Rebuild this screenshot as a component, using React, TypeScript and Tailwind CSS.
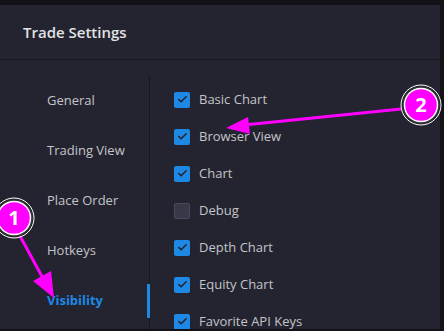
import { Check } from "lucide-react";

const tabs = ["General", "Trading View", "Place Order", "Hotkeys", "Visibility"];

const options = [
  { label: "Basic Chart", checked: true },
  { label: "Browser View", checked: true },
  { label: "Chart", checked: true },
  { label: "Debug", checked: false },
  { label: "Depth Chart", checked: true },
  { label: "Equity Chart", checked: true },
  { label: "Favorite API Keys", checked: true },
];

function Callouts() {
  return (
    <svg
      className="pointer-events-none absolute inset-0"
      width={444}
      height={331}
    >
      {/* 1 */}
      <line x1={20} y1={236} x2={45} y2={282} stroke="#ff00ff" strokeWidth={3} />
      <polygon points="54,298 33,281 51,271" fill="#ff00ff" />
      <circle cx={14} cy={218} r={20} fill="none" stroke="#fff" strokeWidth={1} />
      <circle cx={14} cy={218} r={18} fill="none" stroke="#333" strokeWidth={1.5} />
      <circle cx={14} cy={218} r={16.5} fill="#ff00ff" stroke="#fff" strokeWidth={1.5} />
      <text
        x={14}
        y={225}
        textAnchor="middle"
        fill="#fff"
        fontSize={20}
        fontWeight={700}
        fontFamily="'Open Sans', sans-serif"
      >
        1
      </text>

      {/* 2 */}
      <line x1={401} y1={109} x2={244} y2={125} stroke="#ff00ff" strokeWidth={3} />
      <polygon points="226,128 248,117 250,134" fill="#ff00ff" />
      <circle cx={421} cy={105} r={20} fill="none" stroke="#fff" strokeWidth={1} />
      <circle cx={421} cy={105} r={18} fill="none" stroke="#333" strokeWidth={1.5} />
      <circle cx={421} cy={105} r={16.5} fill="#ff00ff" stroke="#fff" strokeWidth={1.5} />
      <text
        x={421}
        y={112}
        textAnchor="middle"
        fill="#fff"
        fontSize={20}
        fontWeight={700}
        fontFamily="'Open Sans', sans-serif"
      >
        2
      </text>
    </svg>
  );
}

export default function App() {
  return (
    <div
      className="relative flex h-[331px] w-[444px] flex-col overflow-hidden bg-[#121217]"
      style={{ fontFamily: "'Open Sans', 'Noto Sans', sans-serif" }}
    >
      <div className="mt-[5px] flex h-[324px] w-[440px] flex-col overflow-hidden bg-[#23242f]">
        {/* Header */}
        <div className="flex h-[55px] shrink-0 items-center border-b border-[#17171d] px-[23px]">
          <h1 className="text-[15px] font-semibold text-[#e2e2e6]">
            Trade Settings
          </h1>
        </div>

        {/* Body */}
        <div className="flex flex-1">
          {/* Sidebar */}
          <div className="w-[150px] shrink-0">
            <div className="mt-[24px] h-full border-r border-[#17171d]">
              <div className="-mt-[8px] flex flex-col">
                {tabs.map((tab) => {
                  const active = tab === "Visibility";
                  return (
                    <div
                      key={tab}
                      className={
                        active
                          ? "relative flex h-[50px] shrink-0 items-center pl-[47px] text-[13px] font-bold text-[#1e88e5]"
                          : "flex h-[50px] shrink-0 items-center pl-[47px] text-[13px] text-[#c4c4ca]"
                      }
                    >
                      {tab}
                      {active && (
                        <span className="absolute -right-px top-[8px] h-[34px] w-[3px] bg-[#1e88e5]" />
                      )}
                    </div>
                  );
                })}
              </div>
            </div>
          </div>

          {/* Options */}
          <div className="flex flex-col pl-[24px] pt-[21px]">
            {options.map((opt) => (
              <div key={opt.label} className="flex h-[37px] shrink-0 items-center gap-[9px]">
                <div
                  className={
                    opt.checked
                      ? "flex h-[16px] w-[16px] items-center justify-center rounded-[2px] bg-[#1e88e5]"
                      : "h-[16px] w-[16px] rounded-[2px] border border-[#4a4a5c] bg-[#383849]"
                  }
                >
                  {opt.checked && (
                    <Check size={11} strokeWidth={3.5} className="text-[#23242f]" />
                  )}
                </div>
                <span className="text-[13px] text-[#c4c4ca]">{opt.label}</span>
              </div>
            ))}
          </div>
        </div>
      </div>

      <Callouts />
    </div>
  );
}
